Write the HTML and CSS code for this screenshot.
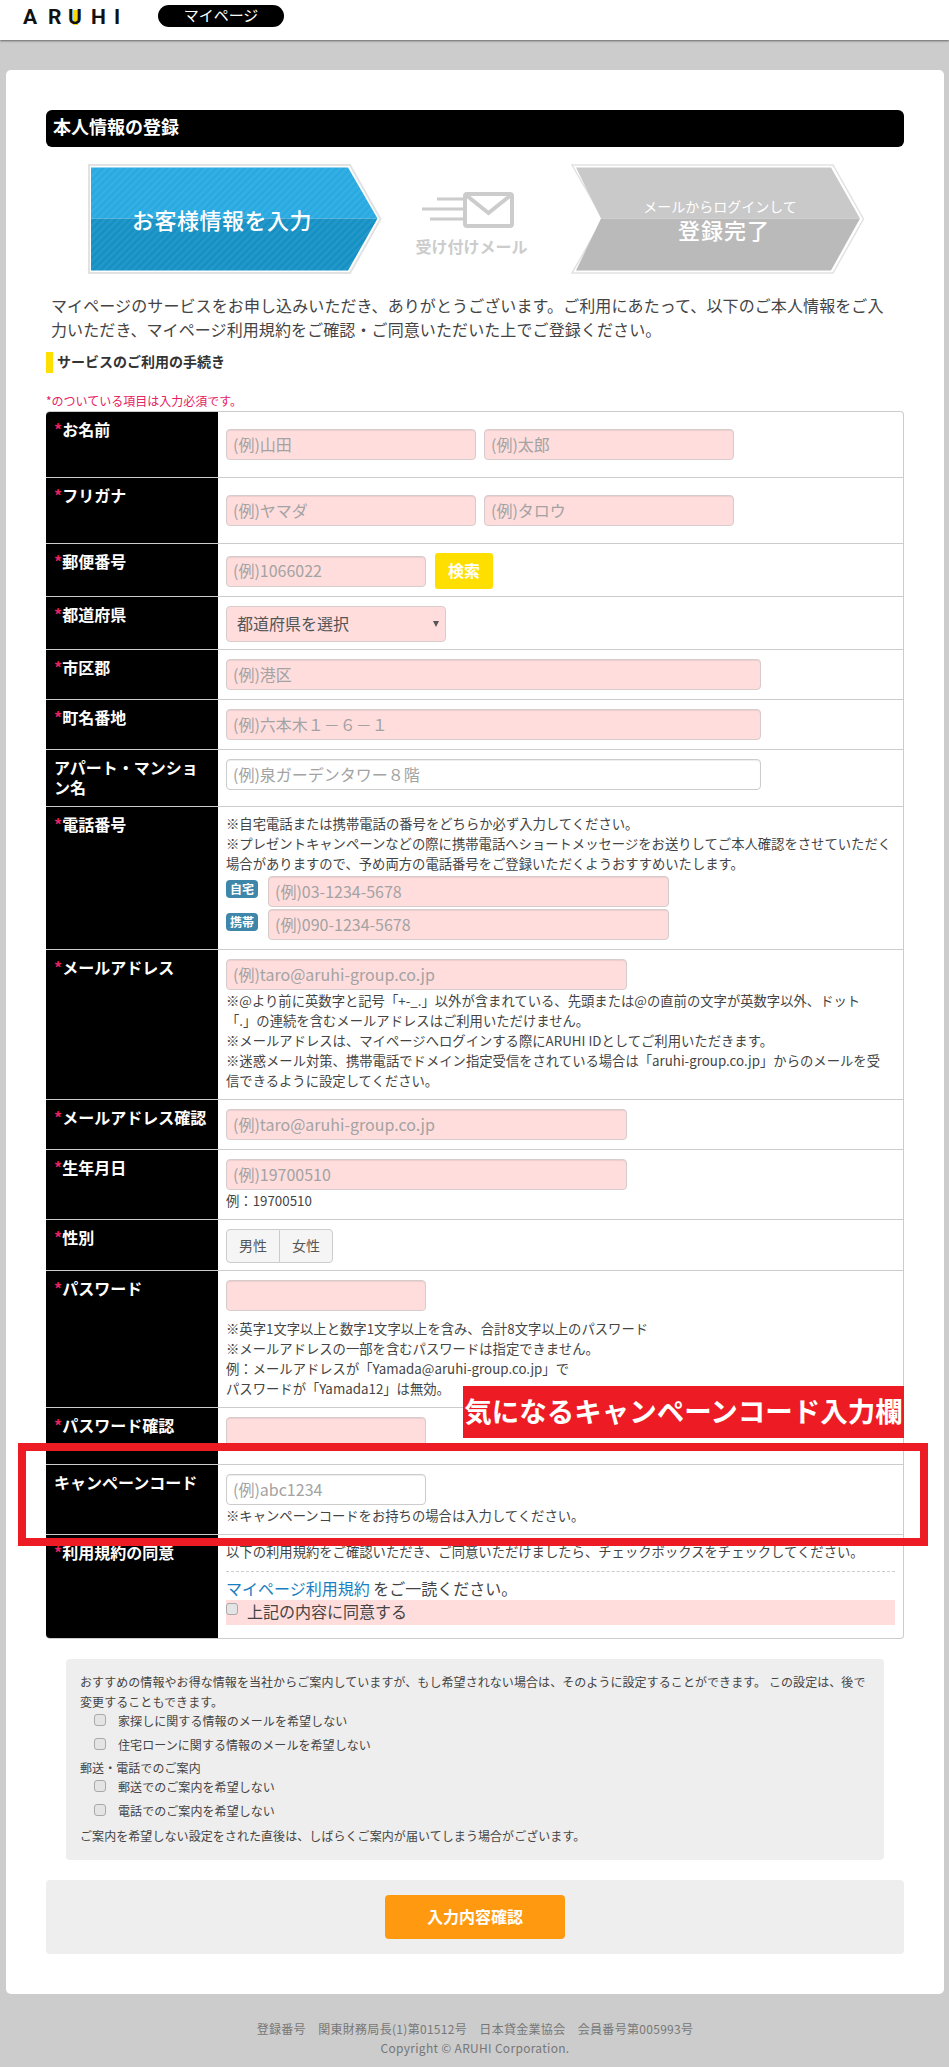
FILE: index.html
```html
<!DOCTYPE html>
<html lang="ja">
<head>
    <meta charset="utf-8" />
    <title>本人情報の登録</title>
    <link rel="stylesheet" href="styles.css">
</head>
<body>
    <div class="header">
        <div class="logo"><span>A</span><span>R</span><span class="logo-u">U</span><span>H</span><span>I</span></div>
        <div class="mypage-pill">マイページ</div>
    </div>

    <div class="main">
        <h1 class="title-bar">本人情報の登録</h1>

        <div class="steps">
            <svg class="step" width="294" height="110" viewBox="0 0 294 110">
                <defs>
                    <pattern id="stripe" width="5" height="5" patternUnits="userSpaceOnUse" patternTransform="rotate(45)">
                        <rect width="2.5" height="5" fill="#fff" opacity="0.07"></rect>
                    </pattern>
                </defs>
                <polygon points="1,1 262,1 292.5,55 262,109 1,109" fill="#fff" stroke="#e2e2e2" stroke-width="2"></polygon>
                <polygon points="3,3.5 260,3.5 289.5,54.5 3,54.5" fill="#27a9e1"></polygon>
                <polygon points="3,54.5 289.5,54.5 260,106.5 3,106.5" fill="#1490c4"></polygon>
                <polygon points="3,3.5 260,3.5 289.5,54.5 260,106.5 3,106.5" fill="url(#stripe)"></polygon>
                <text class="step-main" x="134" y="65" text-anchor="middle" letter-spacing="0.5">お客様情報を入力</text>
            </svg>

            <div class="mail-step">
                <svg width="92" height="36" viewBox="0 0 92 36">
                    <rect x="43" y="2" width="47" height="32" rx="2" fill="none" stroke="#ccc" stroke-width="4"></rect>
                    <polyline points="44,3 66.500,21 89,3" fill="none" stroke="#ccc" stroke-width="4"></polyline>
                    <path d="M15 7H41M0 17H41M8 27H41" fill="none" stroke="#ccc" stroke-width="3"></path>
                </svg>
                <div class="mail-label">受け付けメール</div>
            </div>

            <svg class="step" width="294" height="110" viewBox="0 0 294 110">
                <polygon points="1,1 262,1 292.5,55 262,109 1,109 32,55" fill="#fff" stroke="#e2e2e2" stroke-width="1.5"></polygon>
                <polygon points="5,3.5 260,3.5 289,54.5 30,54.5" fill="#c9c9c9"></polygon>
                <polygon points="30,54.5 289,54.5 260,106.5 5,106.5" fill="#bababa"></polygon>
                <text class="step-sub" x="149" y="48" text-anchor="middle">メールからログインして</text>
                <text class="step-main" x="153" y="75" text-anchor="middle" letter-spacing="1">登録完了</text>
            </svg>
        </div>

        <p class="intro">マイページのサービスをお申し込みいただき、ありがとうございます。ご利用にあたって、以下のご本人情報をご入力いただき、マイページ利用規約をご確認・ご同意いただいた上でご登録ください。</p>
        <h2 class="sub-title">サービスのご利用の手続き</h2>
        <p class="required-note">*のついている項目は入力必須です。</p>

        <div class="form-table">
            <div class="row">
                <div class="label"><span class="req">*</span>お名前</div>
                <div class="field field-tall two-inputs">
                    <input class="input w250 must" placeholder="(例)山田">
                    <input class="input w250 must" placeholder="(例)太郎">
                </div>
            </div>
            <div class="row">
                <div class="label"><span class="req">*</span>フリガナ</div>
                <div class="field field-tall two-inputs">
                    <input class="input w250 must" placeholder="(例)ヤマダ">
                    <input class="input w250 must" placeholder="(例)タロウ">
                </div>
            </div>
            <div class="row">
                <div class="label"><span class="req">*</span>郵便番号</div>
                <div class="field field-short zip-line">
                    <input class="input w200 must" placeholder="(例)1066022">
                    <button class="search-btn" type="button">検索</button>
                </div>
            </div>
            <div class="row">
                <div class="label"><span class="req">*</span>都道府県</div>
                <div class="field field-short">
                    <div class="select-wrap">
                        <select class="pref-select"><option>都道府県を選択</option></select>
                    </div>
                </div>
            </div>
            <div class="row">
                <div class="label"><span class="req">*</span>市区郡</div>
                <div class="field"><input class="input w535 must" placeholder="(例)港区"></div>
            </div>
            <div class="row">
                <div class="label"><span class="req">*</span>町名番地</div>
                <div class="field"><input class="input w535 must" placeholder="(例)六本木１－６－１"></div>
            </div>
            <div class="row">
                <div class="label">アパート・マンション名</div>
                <div class="field"><input class="input w535" placeholder="(例)泉ガーデンタワー８階"></div>
            </div>
            <div class="row">
                <div class="label"><span class="req">*</span>電話番号</div>
                <div class="field field-notes">
                    <p class="note">※自宅電話または携帯電話の番号をどちらか必ず入力してください。<br>※プレゼントキャンペーンなどの際に携帯電話へショートメッセージをお送りしてご本人確認をさせていただく場合がありますので、予め両方の電話番号をご登録いただくようおすすめいたします。</p>
                    <div class="phone-line first">
                        <span class="phone-badge">自宅</span>
                        <input class="input w400 must" placeholder="(例)03-1234-5678">
                    </div>
                    <div class="phone-line">
                        <span class="phone-badge">携帯</span>
                        <input class="input w400 must" placeholder="(例)090-1234-5678">
                    </div>
                </div>
            </div>
            <div class="row">
                <div class="label"><span class="req">*</span>メールアドレス</div>
                <div class="field field-with-note">
                    <input class="input w400 must" placeholder="(例)taro@aruhi-group.co.jp">
                    <p class="note">※@より前に英数字と記号「+-_.」以外が含まれている、先頭または@の直前の文字が英数字以外、ドット<br>「.」の連続を含むメールアドレスはご利用いただけません。<br>※メールアドレスは、マイページへログインする際にARUHI IDとしてご利用いただきます。<br>※迷惑メール対策、携帯電話でドメイン指定受信をされている場合は「aruhi-group.co.jp」からのメールを受<br>信できるように設定してください。</p>
                </div>
            </div>
            <div class="row">
                <div class="label"><span class="req">*</span>メールアドレス確認</div>
                <div class="field"><input class="input w400 must" placeholder="(例)taro@aruhi-group.co.jp"></div>
            </div>
            <div class="row">
                <div class="label"><span class="req">*</span>生年月日</div>
                <div class="field field-with-note">
                    <input class="input w400 must" placeholder="(例)19700510">
                    <p class="note">例：19700510</p>
                </div>
            </div>
            <div class="row">
                <div class="label"><span class="req">*</span>性別</div>
                <div class="field field-short">
                    <div class="gender-group">
                        <button class="gender-btn" type="button">男性</button>
                        <button class="gender-btn" type="button">女性</button>
                    </div>
                </div>
            </div>
            <div class="row">
                <div class="label"><span class="req">*</span>パスワード</div>
                <div class="field field-with-note">
                    <input class="input w200 must" type="password">
                    <p class="note note-spaced">※英字1文字以上と数字1文字以上を含み、合計8文字以上のパスワード<br>※メールアドレスの一部を含むパスワードは指定できません。<br>例：メールアドレスが「Yamada@aruhi-group.co.jp」で<br>パスワードが「Yamada12」は無効。</p>
                </div>
            </div>
            <div class="row">
                <div class="label"><span class="req">*</span>パスワード確認</div>
                <div class="field field-confirm"><input class="input w200 must" type="password"></div>
            </div>
            <div class="row">
                <div class="label">キャンペーンコード</div>
                <div class="field field-with-note">
                    <input class="input w200" placeholder="(例)abc1234">
                    <p class="note">※キャンペーンコードをお持ちの場合は入力してください。</p>
                </div>
            </div>
            <div class="row row-last">
                <div class="label"><span class="req">*</span>利用規約の同意</div>
                <div class="field field-terms">
                    <p class="note terms-note">以下の利用規約をご確認いただき、ご同意いただけましたら、チェックボックスをチェックしてください。</p>
                    <p class="terms-read"><a href="#">マイページ利用規約</a> をご一読ください。</p>
                    <label class="agree-line"><input class="check" type="checkbox">上記の内容に同意する</label>
                </div>
            </div>

            <div class="campaign-frame"></div>
        </div>

        <div class="campaign-callout">気になるキャンペーンコード入力欄</div>

        <div class="mail-prefs">
            <p>おすすめの情報やお得な情報を当社からご案内していますが、もし希望されない場合は、そのように設定することができます。 この設定は、後で変更することもできます。</p>
            <div class="pref-list">
                <label class="pref-line"><input class="check" type="checkbox">家探しに関する情報のメールを希望しない</label>
                <label class="pref-line"><input class="check" type="checkbox">住宅ローンに関する情報のメールを希望しない</label>
            </div>
            <p>郵送・電話でのご案内</p>
            <div class="pref-list">
                <label class="pref-line"><input class="check" type="checkbox">郵送でのご案内を希望しない</label>
                <label class="pref-line"><input class="check" type="checkbox">電話でのご案内を希望しない</label>
            </div>
            <p class="pref-foot">ご案内を希望しない設定をされた直後は、しばらくご案内が届いてしまう場合がございます。</p>
        </div>

        <div class="submit-area">
            <button class="submit-btn" type="button">入力内容確認</button>
        </div>
    </div>

    <div class="footer">
        <p>登録番号　関東財務局長(1)第01512号　日本貸金業協会　会員番号第005993号</p>
        <p>Copyright © ARUHI Corporation.</p>
    </div>
</body>
</html>
```

FILE: styles.css
```css
* {
    box-sizing: border-box;
}

body {
    margin: 0;
    background-color: #ccc;
    color: #444;
    font-family: "Noto Sans CJK JP", "Liberation Sans", sans-serif;
    font-size: 16px;
}

p {
    margin: 0;
}

.header {
    height: 40px;
    background-color: white;
    box-shadow: 0 1px 2px rgba(0, 0, 0, 0.5);
    display: flex;
    align-items: flex-start;
    padding-left: 23px;
}

.logo {
    display: grid;
    grid-template-columns: 25px 20px 23px 23px 44px;
    height: 40px;
    padding-top: 5px;
    color: #111;
    font-family: Roboto, "Liberation Sans", sans-serif;
    font-size: 21px;
    font-weight: bold;
    line-height: 25px;
}

.logo-u {
    background: linear-gradient(#ffd800, #ffd800) no-repeat 5px 5px / 5px 15px;
}

.mypage-pill {
    width: 126px;
    height: 22px;
    margin: 5px 0 0 0;
    background-color: black;
    border-radius: 11px;
    color: white;
    font-size: 15px;
    line-height: 20px;
    text-align: center;
}

.main {
    position: relative;
    margin: 30px 5px 0 6px;
    padding: 40px 40px 40px;
    background-color: white;
    border-radius: 5px;
}

.title-bar {
    height: 37px;
    margin: 0;
    padding-left: 7px;
    background-color: black;
    border-radius: 6px;
    color: white;
    font-size: 18px;
    font-weight: bold;
    line-height: 33px;
}

.steps {
    display: flex;
    margin: 17px 0 0 42px;
    height: 110px;
}

.step {
    display: block;
    flex: none;
}

.step-main {
    fill: white;
    font-size: 22px;
    font-weight: 500;
}

.step-sub {
    fill: white;
    font-size: 14px;
}

.mail-step {
    width: 189px;
    padding: 28px 10px 0 0;
    display: flex;
    flex-direction: column;
    align-items: center;
}

.mail-step svg {
    display: block;
    margin-right: 8px;
}

.mail-label {
    margin-top: 8px;
    color: #ccc;
    font-size: 16px;
    font-weight: bold;
    line-height: 20px;
    white-space: nowrap;
}

.intro {
    margin-top: 19px;
    padding: 0 8px 0 5px;
    letter-spacing: 0.1px;
    line-height: 24px;
}

.sub-title {
    margin: 11px 0 0;
    height: 21px;
    padding-left: 4px;
    border-left: 7px solid #ffdf00;
    color: #333;
    font-size: 14px;
    font-weight: bold;
    line-height: 19px;
}

.required-note {
    margin-top: 18px;
    color: #e6215f;
    font-size: 12px;
    line-height: 20px;
}

.form-table {
    position: relative;
    border: 1px solid #ccc;
    border-left: none;
    border-radius: 4px;
}

.row {
    display: grid;
    grid-template-columns: 172px 1fr;
    border-bottom: 1px solid #ccc;
}

.row-last {
    border-bottom: none;
}

.label {
    padding: 7px 8px 9px;
    background-color: black;
    color: white;
    font-size: 16px;
    font-weight: bold;
    line-height: 20px;
}

.row:first-child .label {
    border-top-left-radius: 4px;
}

.row-last .label {
    border-bottom-left-radius: 4px;
}

.req {
    color: #e6215f;
}

.field {
    padding: 9px 8px;
}

.field-tall {
    padding: 17px 8px;
}

.field-short {
    padding-bottom: 7px;
}

.field-with-note {
    padding-bottom: 7px;
}

.field-notes {
    padding: 8px 8px 9px;
}

.field-confirm {
    padding-bottom: 16px;
}

.field-terms {
    padding: 8px 8px 13px;
}

.input {
    display: block;
    height: 31px;
    padding: 3px 6px 5px;
    background-color: white;
    border: 1px solid #ccc;
    border-radius: 4px;
    box-shadow: inset 0 1px 1px rgba(0, 0, 0, 0.075);
    font-family: inherit;
    font-size: 16px;
}

.input::placeholder {
    color: #a3a3a3;
}

.must {
    background-color: #ffdddd;
    border-color: #d6cccc;
}

.w200 { width: 200px; }
.w250 { width: 250px; }
.w400 { width: 401px; }
.w535 { width: 535px; }

.two-inputs {
    display: flex;
    gap: 8px;
}

.zip-line {
    display: flex;
    align-items: center;
    gap: 9px;
}

.search-btn {
    width: 58px;
    height: 36px;
    padding: 0 0 2px;
    background-color: #ffdf00;
    border: none;
    border-radius: 3px;
    color: white;
    font-family: inherit;
    font-size: 16px;
    font-weight: bold;
}

.select-wrap {
    position: relative;
    width: 220px;
}

.select-wrap::after {
    content: "";
    position: absolute;
    right: 7px;
    top: 15px;
    border-style: solid;
    border-width: 6px 3px 0;
    border-color: #555 transparent transparent;
}

.pref-select {
    appearance: none;
    display: block;
    width: 100%;
    height: 36px;
    padding: 0 0 2px 10px;
    background-color: #ffdddd;
    border: 1px solid #d6cccc;
    border-radius: 4px;
    color: #555;
    font-family: inherit;
    font-size: 16px;
}

.note {
    margin-top: -1px;
    padding-bottom: 1px;
    color: #444;
    font-size: 13.33px;
    line-height: 20px;
}

.input + .note {
    margin-top: 1px;
}

.input + .note-spaced {
    margin-top: 8px;
}

.phone-line {
    display: flex;
    gap: 10px;
    margin-top: 2px;
}

.phone-line.first {
    margin-top: 1px;
}

.phone-badge {
    width: 32px;
    height: 18px;
    margin-top: 4px;
    background-color: #3f87aa;
    border-radius: 4px;
    color: white;
    font-size: 12px;
    font-weight: bold;
    line-height: 17px;
    text-align: center;
}

.gender-group {
    display: flex;
    width: 107px;
    height: 34px;
}

.gender-btn {
    flex: 1;
    padding: 0 0 2px;
    background-color: #f5f5f5;
    border: 1px solid #ccc;
    color: #555;
    font-family: inherit;
    font-size: 14px;
}

.gender-btn:first-child {
    border-radius: 4px 0 0 4px;
}

.gender-btn:last-child {
    margin-left: -1px;
    border-radius: 0 4px 4px 0;
}

.terms-note {
    padding-bottom: 9px;
    border-bottom: 1px dashed #ccc;
}

.terms-read {
    margin-top: 6px;
    font-size: 16px;
    line-height: 20px;
}

.terms-read a {
    color: #1a7fc1;
    text-decoration: none;
}

.agree-line {
    display: flex;
    align-items: flex-start;
    height: 25px;
    margin-top: 2px;
    background-color: #ffdddd;
    line-height: 22px;
}

.check {
    appearance: none;
    flex: none;
    width: 12px;
    height: 12px;
    margin: 3px 9px 0 0;
    background-color: #e4e4e4;
    border: 1px solid #a9a9a9;
    border-radius: 3px;
}

.campaign-frame {
    position: absolute;
    left: -28px;
    top: 1031px;
    width: 910px;
    height: 103px;
    border: 8px solid #ed1c24;
}

.campaign-callout {
    position: absolute;
    left: 457px;
    top: 1316px;
    width: 441px;
    height: 52px;
    background-color: #ed1c24;
    color: white;
    font-size: 27.500px;
    font-weight: bold;
    line-height: 48px;
    text-align: center;
    white-space: nowrap;
}

.mail-prefs {
    margin: 20px 20px 0;
    padding: 13px 14px 14px;
    background-color: #eee;
    border-radius: 4px;
    color: #444;
    font-size: 12px;
    letter-spacing: 0.07px;
    line-height: 20px;
}

.pref-list {
    margin-top: -2px;
}

.pref-line {
    display: flex;
    align-items: flex-start;
    height: 24px;
    padding-left: 14px;
    line-height: 22px;
}

.pref-line .check {
    margin: 4px 12px 0 0;
}

.pref-foot {
    margin-top: 2px;
}

.submit-area {
    margin-top: 20px;
    height: 74px;
    padding-top: 15px;
    background-color: #eee;
    border-radius: 4px;
    text-align: center;
}

.submit-btn {
    width: 180px;
    height: 44px;
    padding: 0 0 2px;
    background-color: #ff9a10;
    border: none;
    border-radius: 4px;
    color: white;
    font-family: inherit;
    font-size: 16px;
    font-weight: bold;
}

.footer {
    padding: 25px 0 8px 1px;
    color: #777;
    font-size: 12px;
    letter-spacing: 0.3px;
    line-height: 19px;
    text-align: center;
}
```
